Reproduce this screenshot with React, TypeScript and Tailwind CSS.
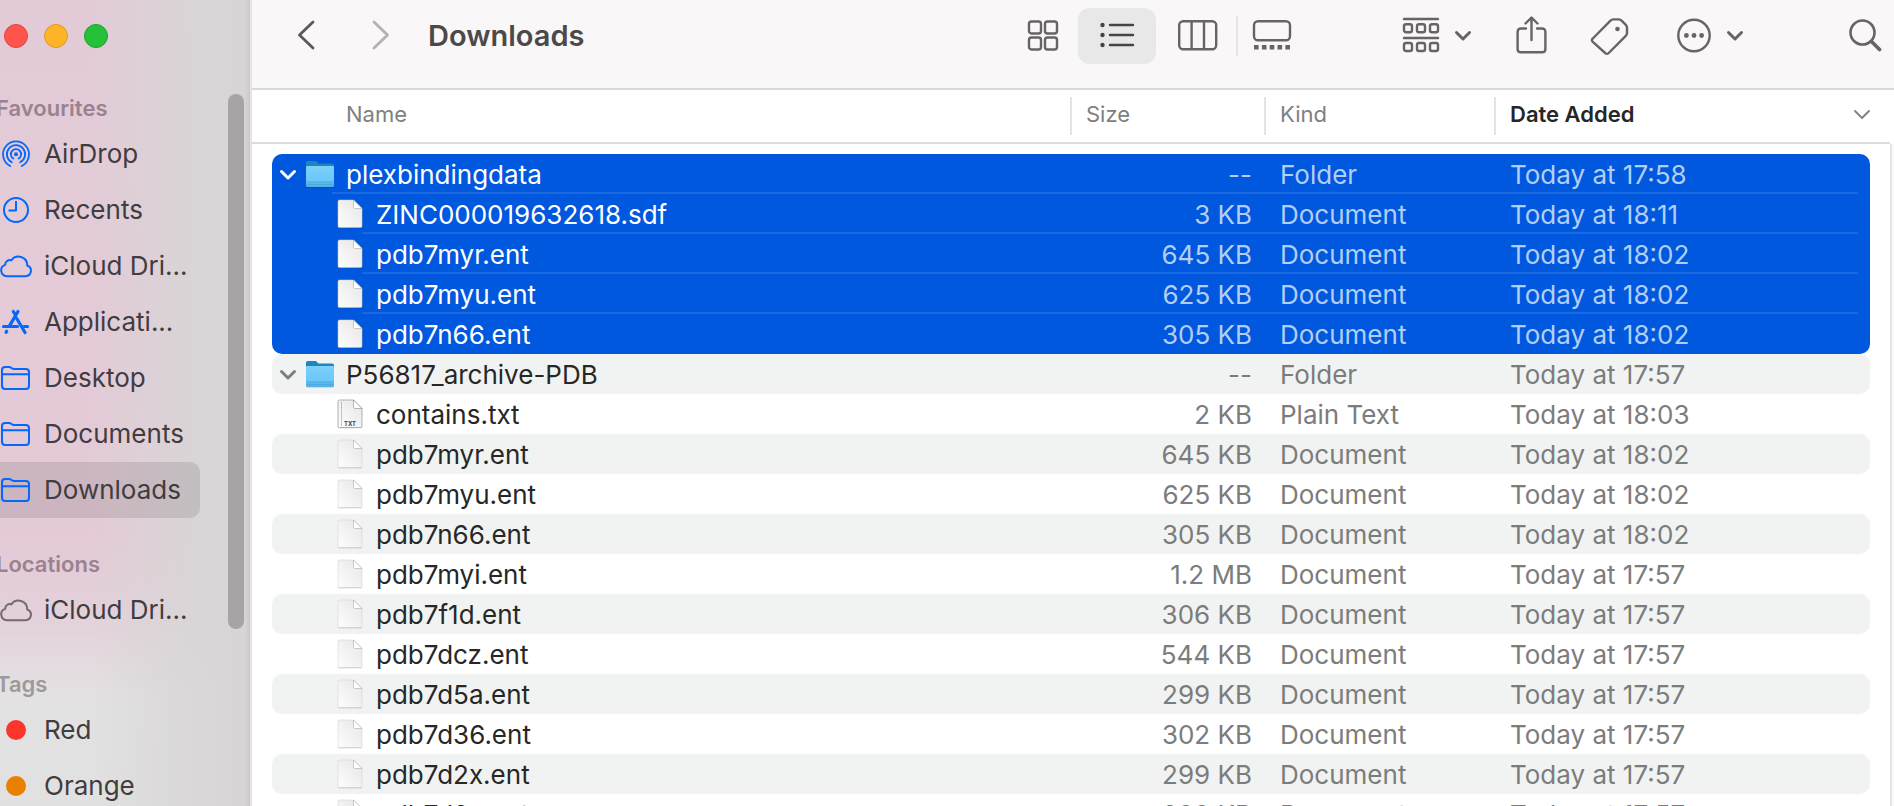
import React from "react";

type Row = {
  name: string;
  size: string;
  kind: string;
  date: string;
  icon: "folder" | "doc" | "txt";
  selected?: boolean;
};

const rows: Row[] = [
  { name: "plexbindingdata", size: "--", kind: "Folder", date: "Today at 17:58", icon: "folder", selected: true },
  { name: "ZINC000019632618.sdf", size: "3 KB", kind: "Document", date: "Today at 18:11", icon: "doc", selected: true },
  { name: "pdb7myr.ent", size: "645 KB", kind: "Document", date: "Today at 18:02", icon: "doc", selected: true },
  { name: "pdb7myu.ent", size: "625 KB", kind: "Document", date: "Today at 18:02", icon: "doc", selected: true },
  { name: "pdb7n66.ent", size: "305 KB", kind: "Document", date: "Today at 18:02", icon: "doc", selected: true },
  { name: "P56817_archive-PDB", size: "--", kind: "Folder", date: "Today at 17:57", icon: "folder" },
  { name: "contains.txt", size: "2 KB", kind: "Plain Text", date: "Today at 18:03", icon: "txt" },
  { name: "pdb7myr.ent", size: "645 KB", kind: "Document", date: "Today at 18:02", icon: "doc" },
  { name: "pdb7myu.ent", size: "625 KB", kind: "Document", date: "Today at 18:02", icon: "doc" },
  { name: "pdb7n66.ent", size: "305 KB", kind: "Document", date: "Today at 18:02", icon: "doc" },
  { name: "pdb7myi.ent", size: "1.2 MB", kind: "Document", date: "Today at 17:57", icon: "doc" },
  { name: "pdb7f1d.ent", size: "306 KB", kind: "Document", date: "Today at 17:57", icon: "doc" },
  { name: "pdb7dcz.ent", size: "544 KB", kind: "Document", date: "Today at 17:57", icon: "doc" },
  { name: "pdb7d5a.ent", size: "299 KB", kind: "Document", date: "Today at 17:57", icon: "doc" },
  { name: "pdb7d36.ent", size: "302 KB", kind: "Document", date: "Today at 17:57", icon: "doc" },
  { name: "pdb7d2x.ent", size: "299 KB", kind: "Document", date: "Today at 17:57", icon: "doc" },
  { name: "pdb7d2s.ent", size: "299 KB", kind: "Document", date: "Today at 17:57", icon: "doc" },
];

function FolderGlyph() {
  return (
    <svg width="30" height="30" viewBox="0 0 30 30" className="shrink-0" aria-hidden="true">
      <defs>
        <linearGradient id="folderFront" x1="0" y1="0" x2="0" y2="1">
          <stop offset="0" stopColor="#7cd0fb" />
          <stop offset="0.7" stopColor="#6cc6f7" />
          <stop offset="1" stopColor="#4fb0e6" />
        </linearGradient>
      </defs>
      <path d="M1 27.5h28v1H1z" fill="#000" opacity="0.2" />
      <path d="M1 4.2C1 2.8 1.8 2 3 2h6.6c1.2 0 1.900.5 2.600 1.300.6.800 1.300 1.200 2.400 1.200H27c1.400 0 2 .8 2 2V10H1z" fill="#1d86bd" />
      <path d="M1 8.200C1 7.400 1.600 7 2.300 7h25.400c.8 0 1.300.4 1.300 1.200v18c0 1.200-.6 1.800-1.800 1.800H2.800C1.600 28 1 27.400 1 26.200z" fill="url(#folderFront)" />
      <path d="M1.500 23h27M1.500 25.300h27" stroke="#3f9fd6" strokeWidth="0.7" />
    </svg>
  );
}

function DocGlyph({ txt }: { txt?: boolean }) {
  return (
    <svg width="26" height="32" viewBox="0 0 26 32" className="shrink-0" aria-hidden="true">
      <defs>
        <linearGradient id="paper" x1="0" y1="1" x2="1" y2="0">
          <stop offset="0" stopColor="#fdfdfd" />
          <stop offset="1" stopColor="#e6e6e6" />
        </linearGradient>
      </defs>
      <path d="M1 3.500C1 2.600 1.600 2 2.500 2H16l9 9v17.800c0 1-.6 1.500-1.500 1.500h-21c-.9 0-1.500-.5-1.500-1.500z" fill="#000" opacity="0.22" />
      <path
        d="M1 3.500C1 2.600 1.600 2 2.500 2H16.500L25 10.500v17.500c0 1-.6 1.500-1.500 1.500h-21c-.9 0-1.500-.5-1.500-1.500z"
        fill="url(#paper)"
        stroke={txt ? "#a9a9a9" : "#cfcfcf"}
        strokeWidth={txt ? 0.9 : 0.5}
      />
      <path d="M16.500 2v7c0 1 .5 1.500 1.500 1.500h7z" fill="#fff" stroke={txt ? "#9a9a9a" : "#b5b5b5"} strokeWidth="0.7" />
      {txt && (
        <>
          <path d="M4.500 4v24" stroke="#aaa" strokeWidth="1" strokeDasharray="1.500 0.700" />
          <text x="13" y="27.500" textAnchor="middle" fontSize="6" fontWeight="700" fontFamily="Inter, sans-serif" fill="#444">
            TXT
          </text>
        </>
      )}
    </svg>
  );
}

const stroke = {
  fill: "none",
  stroke: "currentColor",
  strokeLinecap: "round" as const,
  strokeLinejoin: "round" as const,
};

function AirDropIcon() {
  return (
    <svg width="32" height="32" viewBox="0 0 32 32" {...stroke} strokeWidth="1.800" aria-hidden="true">
      <circle cx="16" cy="16.300" r="2" fill="currentColor" stroke="none" />
      <path d="M13.400 20.600a5.100 5.100 0 1 1 5.200 0" />
      <path d="M11.800 24.300a9.100 9.100 0 1 1 8.400 0" />
      <path d="M10.200 28a13 13 0 1 1 11.600 0" />
    </svg>
  );
}

function ClockIcon() {
  return (
    <svg width="32" height="32" viewBox="0 0 32 32" {...stroke} strokeWidth="2" aria-hidden="true">
      <circle cx="16" cy="16" r="12" />
      <path d="M16 7.800v8.700H9.300" />
    </svg>
  );
}

function CloudIcon() {
  return (
    <svg width="32" height="32" viewBox="0 0 32 32" {...stroke} strokeWidth="2" aria-hidden="true">
      <path d="M6.800 26.200h18.800a5.500 5.500 0 0 0 1.600-10.700A8.700 8.700 0 0 0 11.300 10.400 4.500 4.500 0 0 0 5.200 14.900 5.800 5.800 0 0 0 6.800 26.200z" />
    </svg>
  );
}

function AppsIcon() {
  return (
    <svg width="32" height="32" viewBox="0 0 32 32" {...stroke} strokeWidth="3.200" aria-hidden="true">
      <path d="M13.300 5.500l1.800 3M18 5.500L9.600 19.600" />
      <path d="M3.500 20.500h14M24 20.500h3.500" />
      <path d="M16.600 12.300L25 26.500M6.700 25.300l-.6 1" />
    </svg>
  );
}

function FolderIcon() {
  return (
    <svg width="32" height="32" viewBox="0 0 32 32" {...stroke} strokeWidth="2" aria-hidden="true">
      <path d="M2 8.200C2 6 3 5 5.200 5h3.600c1.200 0 1.900.3 2.700 1 .8.600 1.500 1 2.700 1h11.600c2.200 0 3.200 1 3.200 3.200v13.600c0 2.200-1 3.200-3.200 3.200H5.200C3 27 2 26 2 23.800z" />
      <path d="M2 12.300h27" />
    </svg>
  );
}

function Dot({ color }: { color: "red" | "orange" }) {
  return (
    <span className="flex w-8 justify-center">
      <span className={color === "red" ? "size-5 rounded-full bg-[#fc352c]" : "size-5 rounded-full bg-[#e88000]"} />
    </span>
  );
}

function SideItem({
  label,
  icon,
  active,
  muted,
}: {
  label: string;
  icon: React.ReactNode;
  active?: boolean;
  muted?: boolean;
}) {
  return (
    <li>
      <a
        href="#"
        aria-current={active ? "page" : undefined}
        className={`flex h-14 items-center gap-3 rounded-r-[10px] text-[26px] leading-8 text-[#413c40] ${
          active ? "bg-black/10" : ""
        }`}
      >
        <span className={`flex w-8 shrink-0 ${muted ? "text-[#746a71]" : "text-[#0567fb]"}`}>{icon}</span>
        <span className="whitespace-nowrap">{label}</span>
      </a>
    </li>
  );
}

function SideHeading({ children, grey }: { children: React.ReactNode; grey?: boolean }) {
  return (
    <h2 className={`-ml-1 flex h-[38px] items-center pt-0.5 text-[22px] font-semibold leading-7 ${grey ? "text-[#9c999b]" : "text-[#9a828f]"}`}>
      {children}
    </h2>
  );
}

function Chevron() {
  return (
    <svg width="18" height="12" viewBox="0 0 18 12" {...stroke} strokeWidth="3" aria-hidden="true">
      <path d="M2.500 2.500L9 9l6.500-6.500" />
    </svg>
  );
}

function Sidebar() {
  return (
    <aside className="flex w-[252px] shrink-0 border-r-2 border-[#e6e4e5] bg-[linear-gradient(90deg,rgba(216,214,214,0)_36%,rgba(216,214,214,0.4)_54%,rgba(216,214,214,0.75)_70%,#d8d6d6_88%,#d6d4d4_98%,#cbc9c9_100%),linear-gradient(180deg,#e2cbd7_0%,#e4cad6_66%,#e3d0da_76%,#e3e1e2_86%,#e2e1e1_100%)]">
      <div className="w-[200px] shrink-0">
        <div className="flex gap-4 pt-6 pl-1">
          <button aria-label="Close" className="size-6 rounded-full border border-[#e0443e] bg-[#ff544d]" />
          <button aria-label="Minimise" className="size-6 rounded-full border border-[#dd9a26] bg-[#feb429]" />
          <button aria-label="Zoom" className="size-6 rounded-full border border-[#1ba22c] bg-[#25c138]" />
        </div>
        <nav className="pt-10">
          <SideHeading>Favourites</SideHeading>
          <ul>
            <SideItem label="AirDrop" icon={<AirDropIcon />} />
            <SideItem label="Recents" icon={<ClockIcon />} />
            <SideItem label="iCloud Dri..." icon={<CloudIcon />} />
            <SideItem label="Applicati..." icon={<AppsIcon />} />
            <SideItem label="Desktop" icon={<FolderIcon />} />
            <SideItem label="Documents" icon={<FolderIcon />} />
            <SideItem label="Downloads" icon={<FolderIcon />} active />
          </ul>
          <div className="pt-[26px]">
            <SideHeading>Locations</SideHeading>
            <ul>
              <SideItem label="iCloud Dri..." icon={<CloudIcon />} muted />
            </ul>
          </div>
          <div className="pt-[26px]">
            <SideHeading grey>Tags</SideHeading>
            <ul>
              <SideItem label="Red" icon={<Dot color="red" />} />
              <SideItem label="Orange" icon={<Dot color="orange" />} />
            </ul>
          </div>
        </nav>
      </div>
      <div className="ml-7 mt-[94px] h-[535px] w-4 rounded-full bg-[#a6a4a5]" />
    </aside>
  );
}

function Toolbar() {
  return (
    <header className="flex h-[90px] items-start border-b-2 border-[#dad9da] bg-[#f9f7f8] pt-2 text-[#666465]">
      <div className="flex h-14 flex-1 items-center pl-9">
        <button aria-label="Back" className="flex w-10 justify-center text-[#5b595a]">
          <svg width="32" height="32" viewBox="0 0 32 32" {...stroke} strokeWidth="2.800">
            <path d="M21 2L7.500 15 21 28" />
          </svg>
        </button>
        <button aria-label="Forward" className="ml-8 flex w-10 justify-center text-[#b3b1b2]">
          <svg width="32" height="32" viewBox="0 0 32 32" {...stroke} strokeWidth="2.800">
            <path d="M10 2l13.500 13L10 28" />
          </svg>
        </button>
        <h1 className="ml-7 text-[29px] leading-9 font-semibold text-[#4b494a]">Downloads</h1>
      </div>

      <div className="flex h-14 items-center">
        <button aria-label="Icon view" className="flex w-[70px] justify-center">
          <svg width="32" height="32" viewBox="0 0 32 32" {...stroke} strokeWidth="2.400">
            <rect x="2" y="1.500" width="12" height="12" rx="2.500" />
            <rect x="18" y="1.500" width="12" height="12" rx="2.500" />
            <rect x="2" y="17.500" width="12" height="12" rx="2.500" />
            <rect x="18" y="17.500" width="12" height="12" rx="2.500" />
          </svg>
        </button>
        <button aria-label="List view" aria-pressed="true" className="flex h-14 w-[78px] items-center justify-center rounded-xl bg-[#e9e8e9] text-[#454344]">
          <svg width="36" height="32" viewBox="0 0 36 32" {...stroke} strokeWidth="2.400">
            <path d="M11 5h23M11 15h23M11 25h23" />
            <circle cx="3.500" cy="5" r="2.200" fill="currentColor" stroke="none" />
            <circle cx="3.500" cy="15" r="2.200" fill="currentColor" stroke="none" />
            <circle cx="3.500" cy="25" r="2.200" fill="currentColor" stroke="none" />
          </svg>
        </button>
        <button aria-label="Column view" className="flex w-20 justify-center pl-1">
          <svg width="40" height="32" viewBox="0 0 40 32" {...stroke} strokeWidth="2.400">
            <rect x="1.200" y="1.200" width="37" height="28" rx="4" />
            <path d="M13.600 1.500v27.500M26 1.500v27.500" />
          </svg>
        </button>
        <span className="h-10 w-0.5 bg-[#e6e4e5]" />
        <button aria-label="Gallery view" className="flex w-[68px] justify-center">
          <svg width="40" height="32" viewBox="0 0 40 32" {...stroke} strokeWidth="2.400">
            <rect x="2" y="1.200" width="36" height="19" rx="4" />
            <path d="M2 25h4.600v4.500H2zM9.900 25h4.600v4.500H9.900zM17.700 25h4.600v4.500h-4.600zM25.500 25h4.600v4.500h-4.600zM33.400 25h4.600v4.500h-4.600z" fill="currentColor" stroke="none" />
          </svg>
        </button>
      </div>

      <div className="ml-24 flex h-14 items-center">
        <button aria-label="Group" className="flex items-center gap-[14px]">
          <svg width="38" height="38" viewBox="0 0 38 38" {...stroke} strokeWidth="2.400">
            <path d="M2 2h34M2 21h34" />
            <rect x="2" y="7.200" width="8" height="8" rx="2" />
            <rect x="15" y="7.200" width="8" height="8" rx="2" />
            <rect x="28" y="7.200" width="8" height="8" rx="2" />
            <rect x="2" y="26" width="8" height="8" rx="2" />
            <rect x="15" y="26" width="8" height="8" rx="2" />
            <rect x="28" y="26" width="8" height="8" rx="2" />
          </svg>
          <Chevron />
        </button>
        <button aria-label="Share" className="ml-[42px]">
          <svg width="34" height="40" viewBox="0 0 34 40" {...stroke} strokeWidth="2.400">
            <path d="M12 12.500H7c-2.200 0-3.400 1.200-3.400 3.400v17c0 2.200 1.200 3.400 3.400 3.400h21c2.200 0 3.400-1.200 3.400-3.400v-17c0-2.200-1.200-3.400-3.400-3.400h-5" />
            <path d="M17.500 24V2M11.500 7.500l6-6 6 6" />
          </svg>
        </button>
        <button aria-label="Edit tags" className="ml-[42px]">
          <svg width="40" height="40" viewBox="0 0 40 40" {...stroke} strokeWidth="2.400">
            <path d="M2.800 22.500L20.500 4.600c.9-.9 1.600-1.200 2.800-1.200h5.500c1.200 0 2 .3 2.800 1.200l4.200 4.200c.9.900 1.200 1.600 1.200 2.800v5.500c0 1.200-.3 2-1.200 2.800L18.700 37c-1.200 1.200-2.300 1.200-3.500 0L2.800 25.900c-1.200-1.200-1.200-2.300 0-3.400z" />
            <circle cx="27.500" cy="13" r="2.300" fill="currentColor" stroke="none" />
          </svg>
        </button>
        <button aria-label="More" className="ml-[46px] flex items-center gap-[14px]">
          <svg width="36" height="36" viewBox="0 0 36 36" {...stroke} strokeWidth="2.400">
            <circle cx="18" cy="17.500" r="15.700" />
            <g fill="currentColor" stroke="none">
              <circle cx="10.400" cy="17.500" r="2.400" />
              <circle cx="18" cy="17.500" r="2.400" />
              <circle cx="25.600" cy="17.500" r="2.400" />
            </g>
          </svg>
          <Chevron />
        </button>
        <button aria-label="Search" className="mr-3 ml-[104px]">
          <svg width="34" height="36" viewBox="0 0 34 36" {...stroke}>
            <circle cx="14.500" cy="14.500" r="12" strokeWidth="2.600" />
            <path d="M23.500 23.500l8 8" strokeWidth="3.800" />
          </svg>
        </button>
      </div>
    </header>
  );
}

function FileRow({ row, index }: { row: Row; index: number }) {
  const first = index === 0;
  const last = index === 4;
  const sel = !!row.selected;
  const bg = sel ? "bg-[#0058de]" : index % 2 === 1 ? "bg-[#f1f3f2]" : "bg-white";
  const left = sel ? `${first ? "rounded-tl-[10px]" : ""} ${last ? "rounded-bl-[10px]" : ""}` : "rounded-l-[10px]";
  const right = sel ? `${first ? "rounded-tr-[10px]" : ""} ${last ? "rounded-br-[10px]" : ""}` : "rounded-r-[10px]";
  const line = sel && !last;
  const rule = line ? "border-b-2 border-white/10" : "border-b-2 border-transparent";
  const secondary = sel ? "text-[#b3cef6]" : "text-[#7b7c7b]";
  const folder = row.icon === "folder";

  return (
    <tr aria-selected={sel}>
      <td className="p-0" />
      <td className={`p-0 ${bg} ${left}`}>
        <div className="relative flex h-10 items-center">
          {folder ? (
            <>
              <button
                aria-label={`Collapse ${row.name}`}
                className={`flex w-8 justify-center pt-0.5 ${sel ? "text-white" : "text-[#7d7f7e]"}`}
              >
                <Chevron />
              </button>
              <span className="ml-px flex w-[41px]">
                <FolderGlyph />
              </span>
            </>
          ) : (
            <span className="ml-[65px] flex w-[39px]">
              <DocGlyph txt={row.icon === "txt"} />
            </span>
          )}
          <span className={`pt-0.5 whitespace-nowrap ${sel ? "text-white" : "text-[#262726]"}`}>{row.name}</span>
          {line && <span className={`absolute right-0 bottom-0 h-0.5 bg-white/10 ${folder ? "left-[60px]" : "left-[90px]"}`} />}
        </div>
      </td>
      <td className={`p-0 text-right ${bg} ${secondary}`}>
        <div className={`flex h-10 items-center justify-end pt-1 pr-3 whitespace-nowrap ${rule}`}>{row.size}</div>
      </td>
      <td className={`p-0 ${bg} ${secondary}`}>
        <div className={`flex h-10 items-center pt-1 pl-4 whitespace-nowrap ${rule}`}>{row.kind}</div>
      </td>
      <td className={`p-0 ${bg} ${secondary} ${right}`}>
        <div className={`mr-3 flex h-10 items-center pt-1 pl-4 whitespace-nowrap ${rule}`}>{row.date}</div>
      </td>
      <td className="p-0" />
    </tr>
  );
}

const th = "border-b-2 border-[#dcdcdc] p-0 text-left text-[22px] leading-7 font-normal text-[#808080]";
const thInner = "flex h-[38px] items-center border-l-2 border-[#e3e3e3] pb-1 pl-[14px]";

function FileTable() {
  return (
    <div className="flex min-h-0 flex-1 overflow-hidden bg-white">
      <table className="w-full flex-1 table-fixed border-separate border-spacing-0 self-start text-[26px] leading-8">
        <colgroup>
          <col className="w-5" />
          <col />
          <col className="w-[194px]" />
          <col className="w-[230px]" />
          <col className="w-[376px]" />
          <col className="w-5" />
        </colgroup>
        <thead>
          <tr className="h-[54px]">
            <td className={th} />
            <th scope="col" className={th}>
              <div className="flex h-[38px] items-center pb-1 pl-[74px]">Name</div>
            </th>
            <th scope="col" className={th}>
              <div className={thInner}>Size</div>
            </th>
            <th scope="col" className={th}>
              <div className={thInner}>Kind</div>
            </th>
            <th scope="col" aria-sort="descending" className={`${th} font-semibold`}>
              <div className={`${thInner} justify-between`}>
                <span className="font-semibold text-[#262626]">Date Added</span>
                <svg width="18" height="12" viewBox="0 0 18 12" {...stroke} strokeWidth="1.800" aria-hidden="true">
                  <path d="M3 3l7 7 7-7" />
                </svg>
              </div>
            </th>
            <td className={th} />
          </tr>
        </thead>
        <tbody>
          <tr className="h-[10px]" aria-hidden="true">
            <td colSpan={6} className="p-0" />
          </tr>
          {rows.map((row, i) => (
            <FileRow key={i} row={row} index={i} />
          ))}
        </tbody>
      </table>
      <div className="mt-[54px] w-1 shrink-0 border-l-2 border-[#e4e4e4] bg-[#fafafa]" />
    </div>
  );
}

export default function App() {
  return (
    <div className="flex h-screen overflow-hidden bg-white font-['Inter',sans-serif]">
      <Sidebar />
      <main className="flex min-w-0 flex-1 flex-col">
        <Toolbar />
        <FileTable />
      </main>
    </div>
  );
}
